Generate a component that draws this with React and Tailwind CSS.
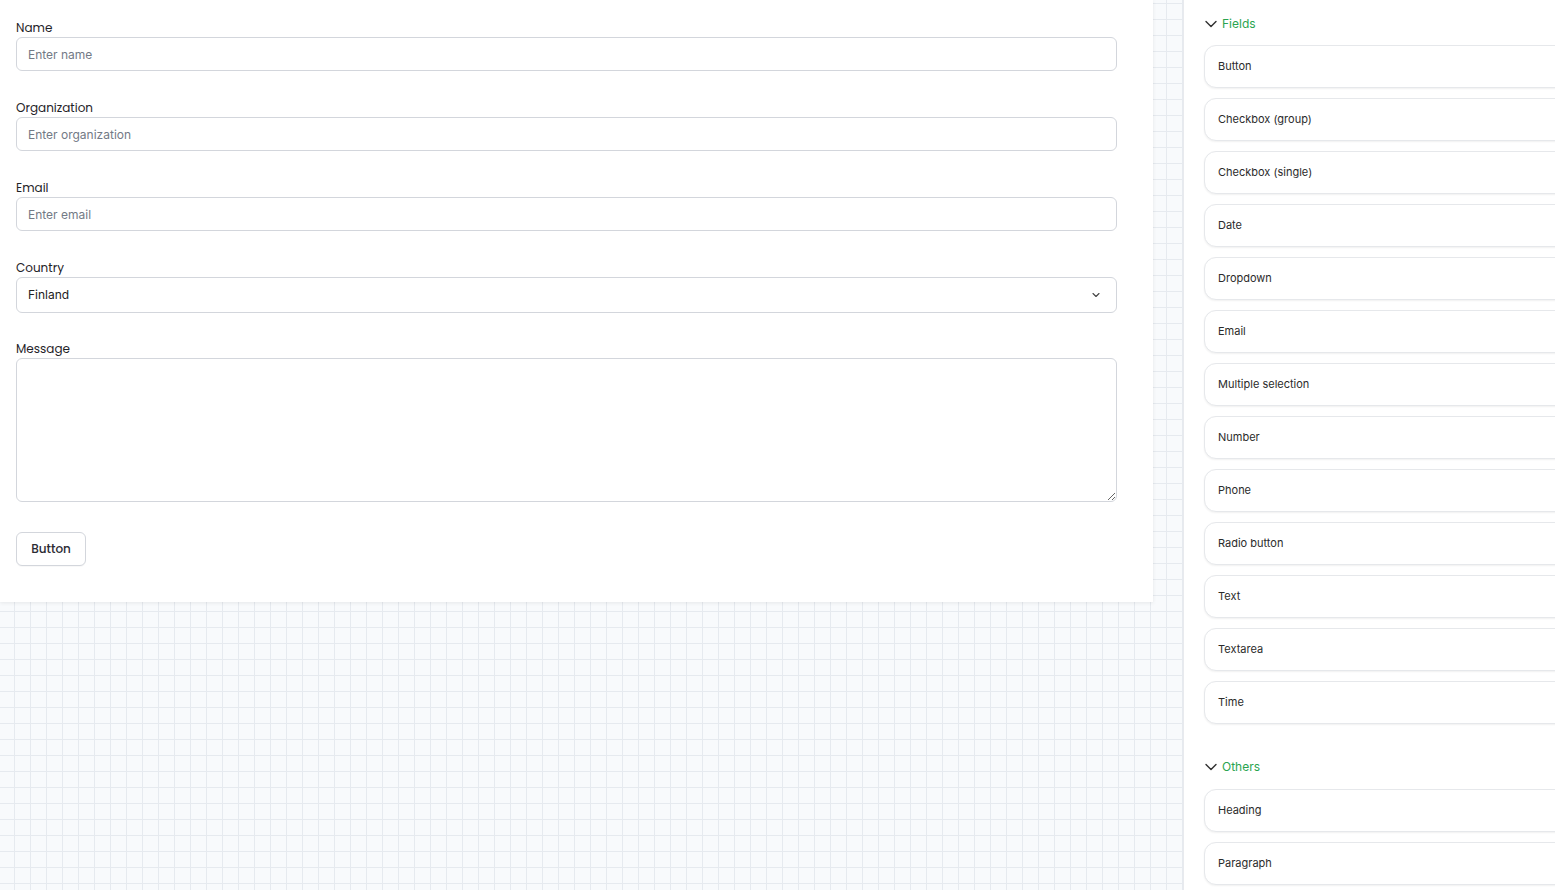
import React from "react";
import { ChevronDown } from "lucide-react";

const fields = [
  "Button",
  "Checkbox (group)",
  "Checkbox (single)",
  "Date",
  "Dropdown",
  "Email",
  "Multiple selection",
  "Number",
  "Phone",
  "Radio button",
  "Text",
  "Textarea",
  "Time",
];
const others = ["Heading", "Paragraph"];

function Label({ children }) {
  return (
    <label className="block pt-[2px] text-[12px] leading-[18px] text-[#1f2328] font-['Poppins','Inter',sans-serif]">
      {children}
    </label>
  );
}

const inputCls =
  "block w-full h-[34px] rounded-[6px] border border-[#d3d6dc] px-[11px] text-[12px] text-[#222] placeholder:text-[#737a86] outline-none";

function Section({ title, items, headMb }) {
  return (
    <div>
      <div className={"flex items-center h-[20px] -ml-[3px] " + headMb}>
        <ChevronDown size={20} strokeWidth={1.7} className="text-[#333]" />
        <span className="ml-[1px] text-[12px] text-[#2aa44f]">{title}</span>
      </div>
      <div className="flex flex-col gap-[10px]">
        {items.map((t) => (
          <div
            key={t}
            className="w-[400px] h-[43px] flex items-center pl-[13px] rounded-[12px] border border-[#e6e8eb] bg-white shadow-[0_1px_2px_rgba(0,0,0,0.06)] text-[11px] text-[#2b2b2b]"
          >
            {t}
          </div>
        ))}
      </div>
    </div>
  );
}

export default function App() {
  return (
    <div className="flex w-[1555px] h-[890px] overflow-hidden font-['Inter',sans-serif]">
      <div className="w-[1183px] h-full bg-[#f8fafc] bg-[linear-gradient(to_right,#e6eaef_1px,transparent_1px),linear-gradient(to_bottom,#e6eaef_1px,transparent_1px)] bg-size-[16px_16px] bg-position-[14px_3px]">
        <div className="w-[1153px] bg-white shadow-[0_1px_4px_rgba(0,0,0,0.08)] pt-[17px] pb-[36px] pl-[16px]">
          <div className="w-[1101px]">
            <div className="mb-[26px]">
              <Label>Name</Label>
              <input placeholder="Enter name" className={inputCls} />
            </div>
            <div className="mb-[26px]">
              <Label>Organization</Label>
              <input placeholder="Enter organization" className={inputCls} />
            </div>
            <div className="mb-[26px]">
              <Label>Email</Label>
              <input placeholder="Enter email" className={inputCls} />
            </div>
            <div className="mb-[25px]">
              <Label>Country</Label>
              <div className="relative">
                <select
                  defaultValue="Finland"
                  className="block w-full h-[36px] appearance-none rounded-[6px] border border-[#d3d6dc] bg-white px-[11px] text-[12px] text-[#222] outline-none"
                >
                  <option>Finland</option>
                  <option>Sweden</option>
                  <option>Norway</option>
                </select>
                <ChevronDown
                  size={12}
                  strokeWidth={2.2}
                  className="absolute right-[15px] top-[12px] text-[#444] pointer-events-none"
                />
              </div>
            </div>
            <div className="mb-[30px]">
              <Label>Message</Label>
              <textarea className="block w-full h-[144px] rounded-[6px] border border-[#d3d6dc] px-[11px] py-[8px] text-[12px] outline-none" />
            </div>
            <button className="h-[34px] w-[70px] rounded-[6px] border border-[#d3d6dc] bg-white text-[12px] font-medium text-[#2b2b33] font-['Poppins','Inter',sans-serif] shadow-[0_1px_1px_rgba(0,0,0,0.03)]">
              Button
            </button>
          </div>
        </div>
      </div>
      <div className="flex-1 h-full bg-white border-l border-[#e8eaee] pl-[20px] pt-[14px] overflow-hidden">
        <div className="flex flex-col gap-[33px]">
          <Section title="Fields" items={fields} headMb="mb-[11px]" />
          <Section title="Others" items={others} headMb="mb-[12px]" />
        </div>
      </div>
    </div>
  );
}
